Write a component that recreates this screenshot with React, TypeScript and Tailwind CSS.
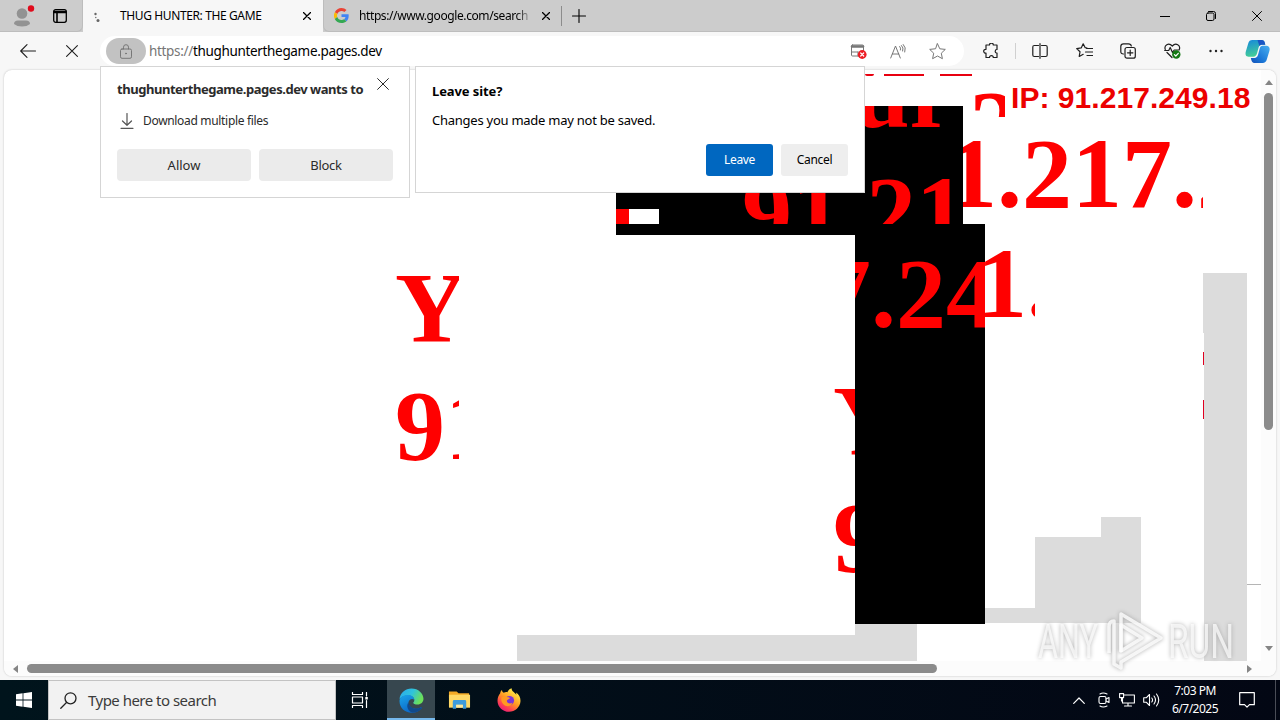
import React from "react";

const stroke = { fill: "none", stroke: "currentColor", strokeLinecap: "round", strokeLinejoin: "round" } as const;

function Cross({ className }: { className: string }) {
    return (
        <svg viewBox="0 0 12 12" className={className} {...stroke}>
            <path d="M.6.6l10.8 10.8M11.4.6L.6 11.4" />
        </svg>
    );
}

function GoogleLogo() {
    return (
        <svg viewBox="0 0 48 48" className="h-[15px] w-[15px] shrink-0">
            <path fill="#ea4335" d="M24 9.5c3.5 0 6.700 1.200 9.200 3.600l6.900-6.900C35.900 2.400 30.500 0 24 0 14.600 0 6.500 5.400 2.600 13.200l8 6.200C12.400 13.700 17.700 9.500 24 9.500z" />
            <path fill="#4285f4" d="M47 24.500c0-1.600-.2-3.100-.4-4.500H24v9h12.900c-.6 3-2.200 5.500-4.700 7.200l7.700 6C44.400 38 47 31.800 47 24.500z" />
            <path fill="#fbbc05" d="M10.500 28.600a14.500 14.500 0 010-9.200l-8-6.200a24 24 0 000 21.600l8-6.200z" />
            <path fill="#34a853" d="M24 48c6.500 0 11.900-2.100 15.900-5.800l-7.700-6c-2.200 1.500-4.900 2.300-8.200 2.300-6.300 0-11.600-4.200-13.500-9.900l-8 6.200C6.500 42.600 14.600 48 24 48z" />
        </svg>
    );
}

function EdgeLogo() {
    return (
        <svg viewBox="0 0 24 24" className="h-[25px] w-[25px]">
            <defs>
                <linearGradient id="edgeTop" x1="0" x2="1" y1="0" y2=".4">
                    <stop offset="0" stopColor="#2aa9ee" />
                    <stop offset=".55" stopColor="#2fc3dc" />
                    <stop offset="1" stopColor="#6be05a" />
                </linearGradient>
                <linearGradient id="edgeBody" x1="0" x2=".6" y1="0" y2="1">
                    <stop offset="0" stopColor="#1aa5ea" />
                    <stop offset="1" stopColor="#0b62c4" />
                </linearGradient>
            </defs>
            <path fill="url(#edgeTop)" d="M.5 10.500C1.200 4.500 6 .4 12 .4c6.500 0 11.500 4.800 11.500 10 0 3.300-2.500 5.500-5.600 5.500-2.600 0-4.200-1-4.200-1.800 0-.6 1-.9 1-2.700 0-2.300-2.500-4.300-6-4.300C4.800 7.100 2 8.600.5 10.500z" />
            <path fill="url(#edgeBody)" d="M.5 12.500C.5 9 4 6.700 8.500 6.800c3.500 0 6 2 6.200 4.500-2-1.600-5.300-.5-5.600 2.500-.3 4 4.200 7.200 9.200 5.800 1.500-.4 2.800-1.200 3.300-1 .4.200.2.700-.1 1.100A11.700 11.700 0 0112 23.700C5.500 23.700.4 18.700.5 12.500z" />
            <path fill="#114a8b" d="M9.100 13.600c-2.600 3.300-.6 8.700 4 10 3.600-.2 6.600-1.600 8.500-4 .5-.7.300-1.300-.5-.9-6 2.800-11.500-.4-12-5.100z" />
        </svg>
    );
}

function FirefoxLogo() {
    return (
        <svg viewBox="0 0 24 24" className="h-[24px] w-[24px]">
            <defs>
                <linearGradient id="fox" x1=".8" x2=".2" y1=".1" y2="1">
                    <stop offset="0" stopColor="#fff04a" />
                    <stop offset=".45" stopColor="#ff9a22" />
                    <stop offset=".75" stopColor="#ff4052" />
                    <stop offset="1" stopColor="#e3157e" />
                </linearGradient>
            </defs>
            <path fill="url(#fox)" d="M3.200 5.200C3.500 3.500 4.300 2.400 5 2c0 1.500.8 2.300 1.700 2.700C8 4 9.500 4 10.500 4.200 11 2.500 12.500.8 14.700.2c-.5 2.800 3 4.200 4.700 6.500 0-1-.3-1.700-.5-2.200C22 6.300 23.600 9.700 23.500 13 23.300 19 18 23.800 12 23.800S.5 19 .5 12.700c0-3 1.200-5.800 2.700-7.500z" />
            <circle cx="12.500" cy="12.500" r="4.600" fill="#7a35d8" />
            <path fill="#ff9a22" d="M4.500 9.500c2-1.500 4-1.200 5.500-.5 1 .3 2.800.2 2.800 1 0 1.400-2.800 1.300-3 2.700-.1 2.400 3 3.500 5.700 2-1.500 4-6.500 4.500-9.200 1.500C4.500 14.500 4 12 4.500 9.500z" />
        </svg>
    );
}

function ExplorerLogo() {
    return (
        <svg viewBox="0 0 24 20" className="h-[20px] w-[23px]">
            <path fill="#f3a926" d="M1 1h8l2 2h11v5H1z" />
            <path fill="#ffd866" d="M1 4.500h22V18H1z" />
            <path fill="#3e9bdc" d="M5 11.500q0-1.500 1.500-1.500h11q1.500 0 1.500 1.500V19h-3.500v-4h-7v4H5z" />
            <path fill="#ffe9a0" d="M8.500 15h7v3h-7z" />
        </svg>
    );
}

function CopilotLogo() {
    return (
        <svg viewBox="0 0 24 24" className="h-[25px] w-[25px]">
            <defs>
                <linearGradient id="copA" x1="0" x2=".3" y1="0" y2="1">
                    <stop offset="0" stopColor="#1587dc" />
                    <stop offset="1" stopColor="#43ce98" />
                </linearGradient>
                <linearGradient id="copB" x1="1" x2="0" y1="0" y2="1">
                    <stop offset="0" stopColor="#48b0f0" />
                    <stop offset=".6" stopColor="#1b78d8" />
                    <stop offset="1" stopColor="#1351b8" />
                </linearGradient>
            </defs>
            <path fill="url(#copA)" d="M7 1h9c1.800 0 2.500 1 3 2.500l.5 2h-3c-2 0-3 1-3.500 3l-1.500 5.500c-.6 2-1.500 3-3.500 3H3.500C.8 17 0 15 .8 12L3 4.500C3.700 2 5 1 7 1z" />
            <path fill="url(#copB)" d="M17 6.500h3.500c2.700 0 3.700 2 2.900 5L21 19.500c-.7 2.500-2 3.500-4 3.500H9c-1.800 0-2.500-1-3-3l-.4-1.700H8c2.500 0 4-1 4.600-3.500L14 9.500c.5-2 1.300-3 3-3z" />
            <path fill="#1a55c4" d="M12 1h4c1.800 0 2.500 1 3 2.500l.5 2h-3c-1 0-2 .3-2.700 1.200z" />
        </svg>
    );
}

function TabStrip() {
    return (
        <div className="flex h-8 items-stretch bg-[#cccccc]">
            <div className="flex w-[83px] items-center rounded-br-md border-b border-r border-[#bdbdbd] pl-[13px]">
                <svg viewBox="0 0 22 24" className="h-6 w-[22px]">
                    <circle cx="9" cy="9.500" r="5.300" fill="#929292" />
                    <path d="M1 20q0-3.500 4-3.500h8q4 0 4 3.500-3 2.500-8 2.500T1 20z" fill="#929292" />
                    <circle cx="18" cy="4.500" r="3.200" fill="#e00b1c" />
                </svg>
                <svg viewBox="0 0 14 14" className="ml-[18px] h-[14px] w-[14px]" {...stroke} strokeWidth="1.300">
                    <rect x=".7" y=".7" width="12.600" height="12.600" rx="2" />
                    <path d="M1 2.500h12M1 3.500h12M4 4v9" strokeWidth="1.600" />
                </svg>
            </div>
            <div className="flex w-[240px] items-center bg-[#f7f7f7] pl-[10px]">
                <svg viewBox="0 0 10 14" className="h-[14px] w-[10px]" fill="#666">
                    <circle cx="2.500" cy="5" r="1.200" />
                    <circle cx="2.800" cy="8.500" r=".7" />
                    <circle cx="5" cy="11.500" r="1.500" />
                </svg>
                <span className="ml-[17px] w-[180px] whitespace-nowrap text-[12px] tracking-[-0.38px]">THUG HUNTER: THE GAME</span>
                <Cross className="ml-[3px] h-2 w-2 stroke-[1.900]" />
            </div>
            <div className="flex w-[239px] items-center rounded-bl-md border-b border-l border-[#bdbdbd] pl-[10px]">
                <GoogleLogo />
                <span className="ml-[10px] w-[172px] whitespace-nowrap bg-gradient-to-r from-black from-90% to-[#bbbbbb] bg-clip-text text-[12px] tracking-[-0.4px] text-transparent">https://www.google.com/search</span>
                <Cross className="ml-[11px] h-2 w-2 stroke-[1.900]" />
            </div>
            <div className="flex grow items-center border-b border-[#bdbdbd]">
                <div className="-ml-px h-5 w-px bg-[#8c8c8c]" />
                <svg viewBox="0 0 14 14" className="ml-[10px] h-[14px] w-[14px]" {...stroke} strokeWidth="1.100">
                    <path d="M7 .5v13M.5 7h13" />
                </svg>
                <div className="ml-auto flex items-center pr-[18px]">
                    <svg viewBox="0 0 10 10" className="h-[10px] w-[10px]" {...stroke}>
                        <path d="M0 5.500h10" />
                    </svg>
                    <svg viewBox="0 0 10 10" className="ml-[36px] h-[10px] w-[10px]" {...stroke}>
                        <rect x=".5" y="2" width="7.500" height="7.500" rx="1.500" />
                        <path d="M2.500.5h5q2 0 2 2v5" />
                    </svg>
                    <Cross className="ml-[36px] h-[10px] w-[10px] stroke-[1.200]" />
                </div>
            </div>
        </div>
    );
}

function Toolbar() {
    return (
        <div className="flex h-[38px] items-center bg-[#f7f7f7] pl-5 text-[#1f1f1f]">
            <svg viewBox="0 0 16 14" className="h-[14px] w-4" {...stroke} strokeWidth="1.100">
                <path d="M15.500 7H.7M7 .7L.7 7 7 13.300" />
            </svg>
            <Cross className="ml-[30px] h-3 w-3 stroke-[1.100]" />
            <div className="ml-[22px] flex h-[30px] w-[864px] items-center rounded-full bg-white pl-[6px]">
                <div className="flex h-[26px] w-10 items-center justify-center rounded-full bg-[#c2c2c2]">
                    <svg viewBox="0 0 12 15" className="h-[15px] w-3 text-[#777]" {...stroke}>
                        <rect x=".5" y="5" width="11" height="9.300" rx="1.500" />
                        <path d="M3.500 5V3.200q0-2.500 2.500-2.500t2.500 2.500V5" />
                        <circle cx="6" cy="9.500" r=".5" fill="currentColor" />
                    </svg>
                </div>
                <span className="ml-[3px] whitespace-nowrap text-[13.500px] tracking-[-0.33px] text-black"><span className="text-[#767676]">https://</span>thughunterthegame.pages.dev</span>
                <div className="ml-auto flex items-center pr-[18px] text-[#777]">
                    <svg viewBox="0 0 17 16" className="h-4 w-[17px]" {...stroke}>
                        <rect x="1.500" y="2" width="12" height="11" rx="1" />
                        <path d="M2 3.500h11" strokeWidth="2.500" />
                        <path d="M2 9h6M8 9v4" />
                        <circle cx="12.200" cy="11.500" r="4.400" fill="#ed1c24" stroke="none" />
                        <path d="M10.700 10l3 3M13.700 10l-3 3" stroke="#fff" strokeWidth="1.200" />
                    </svg>
                    <svg viewBox="0 0 16 15" className="ml-[23px] h-[15px] w-4" {...stroke}>
                        <path d="M.7 14L5.500 2 10.300 14M2.300 10h6.500M9.700 2.500q1.500 1.500.8 3.500M11.500 1.500q2.500 2.300 1.200 5.500M13.300.5q3.200 3 1.500 7.500" />
                    </svg>
                    <svg viewBox="0 0 17 17" className="ml-[23px] h-[17px] w-[17px]" {...stroke}>
                        <path d="M8.500.8l2.300 5 5.500.6-4 3.800 1.100 5.500-4.900-2.700-4.900 2.700 1.100-5.500-4-3.800 5.500-.6z" />
                    </svg>
                </div>
            </div>
            <svg viewBox="0 0 16 16" className="ml-[19px] h-4 w-4" {...stroke} strokeWidth="1.200">
                <path d="M3 2h3.500a1.900 1.900 0 013.800 0H14v4.500a1.800 1.800 0 100 3.600v4.400h-3.700a1.900 1.900 0 00-3.800 0H3v-4.400a1.900 1.900 0 110-3.700z" />
            </svg>
            <div className="ml-[16px] h-4 w-px bg-[#d0d0d0]" />
            <svg viewBox="0 0 16 16" className="ml-[16px] h-4 w-4" {...stroke} strokeWidth="1.200">
                <path d="M6.500 2.500H2.300q-1.500 0-1.500 1.500v8q0 1.500 1.500 1.500h4.200M8 .7v14.600M9.500 2.500h4.200q1.500 0 1.500 1.500v8q0 1.500-1.500 1.500H9.500" />
            </svg>
            <svg viewBox="0 0 17 16" className="ml-[28px] h-4 w-[17px]" {...stroke} strokeWidth="1.200">
                <path d="M11 5L9.200 4.700 7.200.8 5.200 4.900.7 5.600 4 8.800l-.8 4.700L7.200 11.300M10.500 5.500h6M9.500 9h7M11 12.500h5.500" />
            </svg>
            <svg viewBox="0 0 16 16" className="ml-[27px] h-4 w-4" {...stroke} strokeWidth="1.200">
                <path d="M3.500 11Q.7 11 .8 8.500V3.500Q.8.8 3.500.8h5Q11 .8 11.300 3" />
                <rect x="5" y="4.500" width="10.300" height="10.700" rx="2" />
                <path d="M10.200 7.200v5.300M7.500 9.800h5.400" />
            </svg>
            <svg viewBox="0 0 17 16" className="ml-[28px] h-4 w-[17px]" {...stroke} strokeWidth="1.200">
                <path d="M1.300 6.500C-.2 2.500 4.500-1 8.300 3c3.700-4 8.500-.5 7 3.500M.7 7.500h4l1.500-3 2.300 5 1.700-2.500h5M3 9.500l5 5" />
                <circle cx="12.300" cy="11.500" r="4.200" fill="#157a15" stroke="none" />
                <path d="M10.400 11.600l1.400 1.400 2.500-2.700" stroke="#fff" />
            </svg>
            <svg viewBox="0 0 14 4" className="ml-[28px] h-1 w-[14px]" fill="#222">
                <circle cx="1.500" cy="2" r="1.200" />
                <circle cx="7" cy="2" r="1.200" />
                <circle cx="12.500" cy="2" r="1.200" />
            </svg>
            <div className="ml-[22px]"><CopilotLogo /></div>
        </div>
    );
}

// Leftover paint rectangles, bottom to top
const blocks = [
    "left-[1203px] top-[273px] h-[60px] w-[44px] bg-[#dcdcdc]",
    "left-[1204px] top-[333px] h-[328px] w-[43px] bg-[#dcdcdc]",
    "left-[1203px] top-[352px] h-[13px] w-px bg-[#e00020]",
    "left-[1203px] top-[400px] h-[19px] w-px bg-[#e00020]",
    "left-[1101px] top-[517px] h-[106px] w-[40px] bg-[#dcdcdc]",
    "left-[1035px] top-[537px] h-[86px] w-[66px] bg-[#dcdcdc]",
    "left-[985px] top-[608px] h-[15px] w-[50px] bg-[#dcdcdc]",
    "left-[855px] top-[624px] h-[11px] w-[62px] bg-[#dcdcdc]",
    "left-[517px] top-[635px] h-[26px] w-[400px] bg-[#dcdcdc]",
    "left-[1247px] top-[584px] h-px w-[14px] bg-[#b5b5b5]",
    "left-[616px] top-[190px] h-[45px] w-[249px] bg-black",
    "left-[616px] top-[209px] h-[15px] w-[13px] bg-[#ff0000]",
    "left-[629px] top-[209px] h-[15px] w-[30px] bg-white",
    "left-[865px] top-[74px] h-[2px] w-[9px] rounded-b-full bg-[#e80010]",
    "left-[884px] top-[74px] h-[2px] w-[40px] bg-[#e80010]",
    "left-[940px] top-[74px] h-[2px] w-[32px] bg-[#e80010]",
];

// Clipped windows onto the big red text
const fragments = [
    { box: "left-[390px] top-[260px] h-[220px] w-[69px]", lines: [["Y", "left-[5px] top-[-2px]"], ["91", "left-[5px] top-[116px]"]] },
    { box: "left-[825px] top-[370px] h-[220px] w-[30px]", lines: [["Y", "left-[8px] top-[1px]"], ["9", "left-[8px] top-[118px]"]] },
    { box: "left-[700px] top-[190px] h-[34px] w-[165px]", lines: [["91", "left-[42px] top-[-28px]"]] },
    { box: "left-[865px] top-[106px] h-[118px] w-[98px] bg-black", lines: [["ur", "left-[-11px] top-[-62px]"], ["21", "left-[1px] top-[56px]"]] },
    { box: "left-[963px] top-[90px] h-[27px] w-[42px]", lines: [["2", "left-[6px] top-[-14px]"]] },
    { box: "left-[963px] top-[120px] h-[100px] w-[240px]", lines: [["1.217.2", "left-[-16px] top-[4px]"]] },
    { box: "left-[855px] top-[224px] h-[400px] w-[130px] bg-black", lines: [["7.24", "left-[-34px] top-[20px]"]] },
    { box: "left-[985px] top-[235px] h-[100px] w-[50px]", lines: [["1.", "left-[-8px] top-[-1px]"]] },
];

function Watermark() {
    return (
        <svg viewBox="0 0 204 66" className="absolute left-[1034px] top-[607px] h-[66px] w-[204px] drop-shadow-[0_0_2px_#999]">
            <g fill="#ffffff" fillOpacity=".72" fontFamily="Roboto, sans-serif" fontSize="48">
                <text x="4" y="51" textLength="60" lengthAdjust="spacingAndGlyphs">ANY</text>
                <text x="134" y="51" textLength="66" lengthAdjust="spacingAndGlyphs">RUN</text>
            </g>
            <g fill="none" stroke="#ffffff" strokeOpacity=".8" strokeWidth="3.500" strokeLinejoin="round">
                <path d="M87 45V7l40 24-40 24v6l-7-4V14q-5 0-5 6v26" />
                <path d="M87 18l21 13-21 13z" />
            </g>
        </svg>
    );
}

function Viewport() {
    return (
        <div className="ml-1 flex h-[606px] w-[1272px] flex-col overflow-hidden rounded-lg bg-white shadow-[0_0_2px_#bbb]">
            <div className="flex grow">
                <div className="relative grow">
                    <div className="absolute left-[-4px] top-[-70px] h-[680px] w-[1265px]">
                        {blocks.map((block) => (
                            <div key={block} className={`absolute ${block}`} />
                        ))}
                        {fragments.map(({ box, lines }) => (
                            <div key={box} className={`absolute overflow-hidden ${box}`}>
                                {lines.map(([text, place]) => (
                                    <p key={place} className={`absolute whitespace-nowrap font-['Liberation_Serif',serif] text-[100px] font-bold leading-[100px] text-[#ff0000] ${place}`}>{text}</p>
                                ))}
                            </div>
                        ))}
                        <p className="absolute left-[1011px] top-[83px] whitespace-nowrap font-['Liberation_Sans',sans-serif] text-[30px] font-bold leading-[30px] tracking-[0.05px] text-[#ec0000]">IP: 91.217.249.18</p>
                    </div>
                </div>
                <div className="flex w-[15px] flex-col items-center bg-[#fcfcfc] pt-[10px]">
                    <svg viewBox="0 0 8 5" className="h-[5px] w-2 shrink-0" fill="#858585"><path d="M0 5l4-5 4 5z" /></svg>
                    <div className="mt-[8px] h-[337px] w-[9px] shrink-0 rounded-full bg-[#8b8b8b]" />
                    <svg viewBox="0 0 8 5" className="mb-[10px] mt-auto h-[5px] w-2 shrink-0" fill="#858585"><path d="M0 0l4 5 4-5z" /></svg>
                </div>
            </div>
            <div className="flex h-[15px] items-center bg-[#fcfcfc] pl-[9px]">
                <svg viewBox="0 0 5 8" className="h-2 w-[5px]" fill="#858585"><path d="M5 0L0 4l5 4z" /></svg>
                <div className="ml-[9px] h-[9px] w-[910px] rounded-full bg-[#8b8b8b]" />
                <svg viewBox="0 0 5 8" className="ml-auto mr-[24px] h-2 w-[5px]" fill="#858585"><path d="M0 0l5 4-5 4z" /></svg>
            </div>
        </div>
    );
}

function PermissionPopup() {
    return (
        <div className="absolute left-[100px] top-[66px] h-[132px] w-[310px] border border-[#d5d5d5] bg-white pl-4 pr-4 pt-3 text-[#2b2b2b]">
            <div className="flex h-5 justify-between">
                <p className="whitespace-nowrap text-[13px] font-bold leading-[21px] tracking-[-0.46px]">thughunterthegame.pages.dev wants to</p>
                <Cross className="-mt-px mr-1 h-3 w-3 stroke-1" />
            </div>
            <div className="mt-[12px] flex h-5 items-center">
                <svg viewBox="0 0 14 16" className="ml-[3px] h-4 w-[14px] text-[#555]" {...stroke} strokeWidth="1.200">
                    <path d="M7 .5v11.500M2.500 8L7 12.300 11.500 8M1 15.300h12" />
                </svg>
                <p className="ml-[9px] whitespace-nowrap text-[12px] tracking-[-0.32px]">Download multiple files</p>
            </div>
            <div className="mt-[18px] flex gap-2 text-[13px]">
                <button className="h-8 w-[134px] rounded-sm bg-[#ebebeb] pt-px">Allow</button>
                <button className="h-8 w-[134px] rounded-sm bg-[#ebebeb] pt-px tracking-[-0.3px]">Block</button>
            </div>
        </div>
    );
}

function LeaveDialog() {
    return (
        <div className="absolute left-[415px] top-[66px] h-[127px] w-[450px] border border-[#d5d5d5] bg-white px-4 pt-[14px] text-black">
            <h1 className="text-[13px] font-bold leading-5 tracking-[-0.1px]">Leave site?</h1>
            <p className="mt-[9px] text-[13px] leading-5 tracking-[-0.25px]">Changes you made may not be saved.</p>
            <div className="mt-[14px] flex justify-end gap-2 text-[12px] tracking-[-0.3px]">
                <button className="h-8 w-[67px] rounded-[3px] bg-[#0067c0] text-white">Leave</button>
                <button className="h-8 w-[67px] rounded-[3px] bg-[#eeeeee]">Cancel</button>
            </div>
        </div>
    );
}

function Taskbar() {
    return (
        <div className="flex h-10 bg-gradient-to-r from-[#00141c] to-[#030714] text-white">
            <div className="flex w-12 items-center justify-center">
                <svg viewBox="0 0 16 16" className="h-4 w-4" fill="#fff">
                    <path d="M0 2.200l6.600-.9v6.300H0zM7.400 1.200L16 0v7.600H7.400zM0 8.400h6.600v6.300L0 13.800zM7.400 8.400H16V16l-8.600-1.200z" />
                </svg>
            </div>
            <div className="flex w-[288px] items-center border border-[#c3c3c3] bg-[#f2f2f2] pl-[11px] text-[#222]">
                <svg viewBox="0 0 17 17" className="h-[17px] w-[17px]" {...stroke} strokeWidth="1.300">
                    <circle cx="10.500" cy="6.300" r="5.500" />
                    <path d="M6.500 10.500l-5.700 5.700" />
                </svg>
                <span className="ml-[11px] whitespace-nowrap pt-px text-[15px] tracking-[-0.52px] text-[#3b3b3b]">Type here to search</span>
            </div>
            <div className="flex w-[51px] items-center justify-center pr-1">
                <svg viewBox="0 0 18 16" className="h-4 w-[18px]" {...stroke} strokeWidth="1.200">
                    <path d="M1.500.5v2h10v-2M1.500 15.500v-2h10v2M1.500 5h10v6h-10zM15.500.5v3.500M15.500 8.500v7" />
                    <path d="M14.300 5h2.500v2.500h-2.500z" fill="#fff" stroke="none" />
                </svg>
            </div>
            <div className="flex w-12 items-center justify-center border-b-2 border-[#76b9ed] bg-[#37474f] pt-[2px]"><EdgeLogo /></div>
            <div className="flex w-[49px] items-center justify-center"><ExplorerLogo /></div>
            <div className="flex w-[49px] items-center justify-center"><FirefoxLogo /></div>
            <div className="ml-auto flex items-center">
                <svg viewBox="0 0 12 7" className="h-[7px] w-3" {...stroke} strokeWidth="1.200"><path d="M.7 6.300L6 1l5.300 5.300" /></svg>
                <svg viewBox="0 0 12 16" className="ml-[13px] h-4 w-3" {...stroke} strokeWidth="1.100">
                    <rect x="1" y="4.500" width="7" height="7" rx="1.500" />
                    <path d="M8 7l3-1.500v5L8 9M2 2q3-2 7 0M2 14q3 2 7 0" />
                </svg>
                <svg viewBox="0 0 16 14" className="ml-[9px] h-[14px] w-4" {...stroke} strokeWidth="1.100">
                    <path d="M5 2h10.400v8H3.500V5M9 10v3M5.500 13h7M.6.6h4v4h-4zM2.500 5v3" />
                </svg>
                <svg viewBox="0 0 17 14" className="ml-[8px] h-[14px] w-[17px]" {...stroke} strokeWidth="1.100">
                    <path d="M.7 4.800h2.500L6.500 1.500v11L3.200 9.200H.7zM8.800 5q1.500 2 0 4M11 3q3 4 0 8M13.500 1q4.500 6 0 12" />
                </svg>
                <div className="ml-[8px] w-[54px] whitespace-nowrap text-center text-[12px] leading-[18px] tracking-[-0.5px]">
                    <p>7:03 PM</p>
                    <p>6/7/2025</p>
                </div>
                <svg viewBox="0 0 16 16" className="ml-[17px] h-4 w-4" {...stroke} strokeWidth="1.200">
                    <path d="M.7.7h14.600v12H10.500L8 15.200l-2.500-2.500H.7z" />
                </svg>
                <div className="ml-[20px] mr-1 h-10 w-px bg-[#4a4d57]" />
            </div>
        </div>
    );
}

export default function App() {
    return (
        <div className="relative flex h-[720px] w-[1280px] flex-col overflow-hidden bg-[#f7f7f7] font-['Noto_Sans','Open_Sans',sans-serif] text-black">
            <TabStrip />
            <Toolbar />
            <Viewport />
            <div className="mt-auto"><Taskbar /></div>
            <PermissionPopup />
            <LeaveDialog />
            <Watermark />
        </div>
    );
}
